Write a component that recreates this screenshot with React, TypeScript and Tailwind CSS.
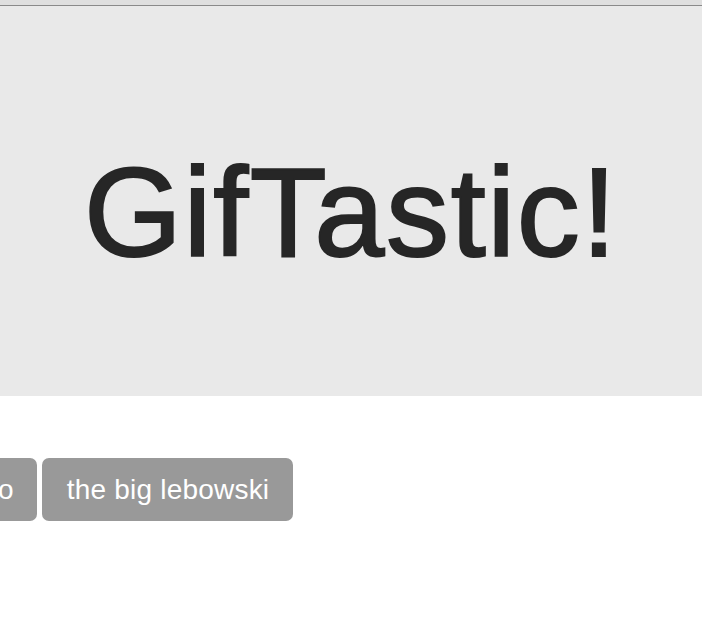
export default function App() {
  return (
    <div className="min-h-[630px] w-full overflow-hidden bg-white font-['Liberation_Sans',Arial,sans-serif]">
      <div className="h-[6px] border-b border-[#8a8a8a] bg-[#dfdfdf]" />
      <header className="h-[390px] bg-[#e9e9e9] pt-[144px]">
        <h1 className="text-center text-[126px] leading-none font-normal tracking-[1.6px] text-[#262626] [-webkit-text-stroke:2px_#262626]">
          GifTastic!
        </h1>
      </header>
      <div className="mt-[62px] -ml-[77px] flex gap-[5px]">
        <button className="h-[63px] shrink-0 rounded-[7px] bg-[#999999] pr-[23px] pl-[26px] text-[28px] tracking-[0.2px] text-white">
          fargo
        </button>
        <button className="h-[63px] shrink-0 rounded-[7px] bg-[#999999] pr-[24px] pl-[25px] text-[28px] tracking-[0.2px] text-white">
          the big lebowski
        </button>
      </div>
    </div>
  );
}
